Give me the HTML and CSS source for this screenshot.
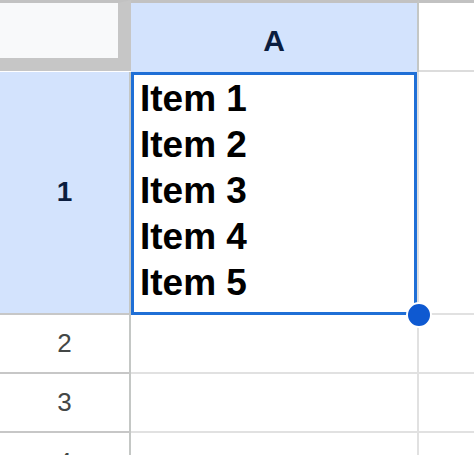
FILE: index.html
```html
<!DOCTYPE html>
<html>
<head>
<meta charset="utf-8">
<link rel="stylesheet" href="styles.css">
</head>
<body>
<div class="sheet">
  <div class="corner"></div>
  <div class="col-head">A</div>
  <div class="col-rest"></div>

  <div class="row-head row-head-sel">1</div>
  <div class="cell cell-sel">
    <div class="line">Item 1</div>
    <div class="line">Item 2</div>
    <div class="line">Item 3</div>
    <div class="line">Item 4</div>
    <div class="line">Item 5</div>
    <span class="handle"></span>
  </div>
  <div class="cell cell-rest"></div>

  <div class="row-head">2</div>
  <div class="cell"></div>
  <div class="cell cell-rest"></div>

  <div class="row-head">3</div>
  <div class="cell"></div>
  <div class="cell cell-rest"></div>

  <div class="row-head">4</div>
  <div class="cell"></div>
  <div class="cell cell-rest"></div>
</div>
</body>
</html>
```

FILE: styles.css
```css
* { box-sizing: border-box; }
html, body { margin: 0; padding: 0; background: #ffffff; overflow: hidden; }
body { width: 474px; height: 455px; font-family: "Liberation Sans", Arial, sans-serif; }

.sheet {
  display: grid;
  grid-template-columns: 131px 288px 1fr;
  grid-template-rows: 72px 243px 59px 59px 60px;
}

.corner {
  background: #f8f9fa;
  border-top: 3px solid #c2c2c2;
  border-right: 13px solid #c6c6c6;
  border-bottom: 13px solid #c6c6c6;
  margin-bottom: 1px;
}

.col-head {
  background: #d3e3fd;
  border-top: 3px solid #c2c2c2;
  border-right: 2px solid #c4c7c5;
  display: flex;
  align-items: center;
  justify-content: center;
  padding-top: 6px;
  font-weight: bold;
  font-size: 30px;
  color: #0b1d3f;
}

.col-rest {
  border-top: 3px solid #c2c2c2;
  border-bottom: 2px solid #dcdcdc;
}

.row-head {
  border-right: 2px solid #c4c7c5;
  border-bottom: 2px solid #c7c7c7;
  display: flex;
  align-items: center;
  justify-content: center;
  font-size: 26px;
  color: #444746;
}

.row-head-sel {
  background: #d3e3fd;
  font-weight: bold;
  font-size: 28px;
  color: #0b1d3f;
  padding-bottom: 2px;
}

.cell {
  border-right: 2px solid #e1e1e1;
  border-bottom: 2px solid #e1e1e1;
}

.cell-rest { border-right: none; }

.cell-sel {
  position: relative;
  border-bottom: none;
  box-shadow: inset 0 0 0 3px #1f6fd6;
  padding: 4px 0 0 9px;
  font-weight: bold;
  font-size: 37px;
  line-height: 46px;
  color: #000000;
}

.handle {
  position: absolute;
  right: -15px;
  bottom: -13px;
  width: 26px;
  height: 26px;
  border-radius: 50%;
  background: #0e59d1;
  border: 2px solid #ffffff;
  z-index: 2;
}
```
